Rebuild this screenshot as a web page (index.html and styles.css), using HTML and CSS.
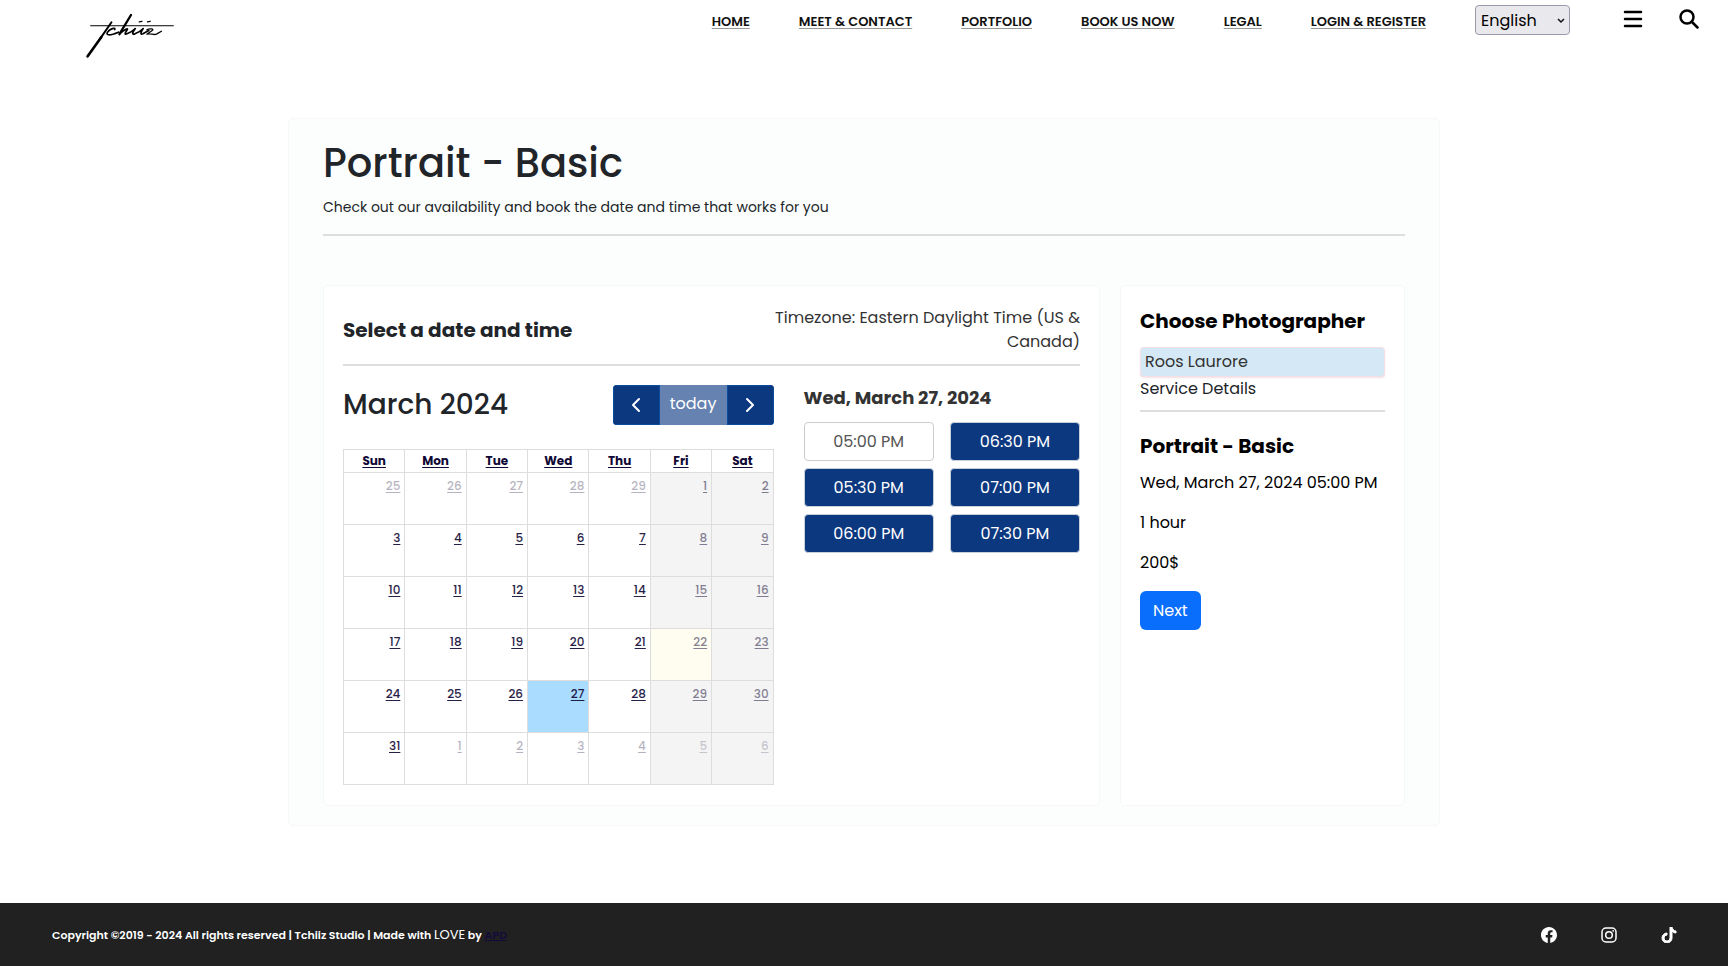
FILE: index.html
```html
<!DOCTYPE html>
<html lang="en">
<head>
<meta charset="utf-8">
<meta name="viewport" content="width=device-width, initial-scale=1">
<title>Portrait - Basic | Tchiiz Studio</title>
<link rel="stylesheet" href="styles.css">
</head>
<body>
<header class="site-header">
  <a class="logo" href="#" aria-label="Tchiiz">
    <svg viewBox="76 40 270 136" width="90" height="45" fill="none" stroke="#000" stroke-linecap="round" stroke-linejoin="round">
      <path d="M92 78.500H342" stroke-width="3"/>
      <path d="M155 68L122 116" stroke-width="6"/>
      <path d="M124 113L83 171" stroke-width="8"/>
      <path d="M165 90C168 82 150 88 143 98C137 108 150 109 176 98" stroke-width="5"/>
      <path d="M214 46L179 104" stroke-width="7"/>
      <path d="M181 102C192 91 206 84 203 90C197 99 192 107 202 103C212 99 222 92 227 87C220 97 214 107 226 103C236 99 246 92 251 87C244 97 240 107 250 103L268 93" stroke-width="5"/>
      <path d="M262 91C270 86 286 88 278 93L262 104C274 100 282 108 291 104L306 95" stroke-width="4"/>
      <path d="M239 67L247 65M264 67L272 65" stroke-width="4"/>
    </svg>
  </a>
  <nav class="nav" aria-label="Main">
    <a href="#">HOME</a>
    <a href="#">MEET &amp; CONTACT</a>
    <a href="#">PORTFOLIO</a>
    <a href="#">BOOK US NOW</a>
    <a href="#">LEGAL</a>
    <a href="#">LOGIN &amp; REGISTER</a>
  </nav>
  <div class="language">
    <select aria-label="Language"><option>English</option></select>
    <svg class="chevron" viewBox="0 0 8 6" width="8" height="6" fill="none" stroke="#111" stroke-width="1.500"><path d="M1 1l3 3 3-3"/></svg>
  </div>
  <div class="tools">
    <button class="icon-button" aria-label="Menu">
      <svg viewBox="0 0 20 20" width="20" height="20" stroke="#000" stroke-width="2.500" stroke-linecap="round"><path d="M2 3H18M2 10H18M2 17H18"/></svg>
    </button>
    <button class="icon-button" aria-label="Search">
      <svg viewBox="0 0 20 20" width="20" height="20" fill="none" stroke="#000" stroke-width="2.500" stroke-linecap="round"><circle cx="8" cy="8" r="6.500"/><path d="M13 13L18.500 18.500"/></svg>
    </button>
  </div>
</header>

<main class="main">
  <section class="booking">
    <h1>Portrait - Basic</h1>
    <p class="lead">Check out our availability and book the date and time that works for you</p>
    <hr>
    <div class="panels">
      <section class="panel schedule">
        <div class="schedule-head">
          <h2>Select a date and time</h2>
          <p class="timezone">Timezone: Eastern Daylight Time (US &amp; Canada)</p>
        </div>
        <hr>
        <div class="schedule-body">
          <div class="calendar">
            <div class="toolbar">
              <h2 class="month">March 2024</h2>
              <div class="button-group">
                <button aria-label="Previous month"><svg viewBox="0 0 10 16" width="10" height="16" fill="none" stroke="#fff" stroke-width="2" stroke-linecap="round" stroke-linejoin="round"><path d="M8 2L2 8l6 6"/></svg></button>
                <button class="today" disabled>today</button>
                <button aria-label="Next month"><svg viewBox="0 0 10 16" width="10" height="16" fill="none" stroke="#fff" stroke-width="2" stroke-linecap="round" stroke-linejoin="round"><path d="M2 2l6 6-6 6"/></svg></button>
              </div>
            </div>
            <table>
              <thead><tr><th><a href="#">Sun</a></th><th><a href="#">Mon</a></th><th><a href="#">Tue</a></th><th><a href="#">Wed</a></th><th><a href="#">Thu</a></th><th><a href="#">Fri</a></th><th><a href="#">Sat</a></th></tr></thead>
              <tbody>
                <tr><td class="other"><a href="#">25</a></td><td class="other"><a href="#">26</a></td><td class="other"><a href="#">27</a></td><td class="other"><a href="#">28</a></td><td class="other"><a href="#">29</a></td><td class="closed"><a href="#">1</a></td><td class="closed"><a href="#">2</a></td></tr>
                <tr><td><a href="#">3</a></td><td><a href="#">4</a></td><td><a href="#">5</a></td><td><a href="#">6</a></td><td><a href="#">7</a></td><td class="closed"><a href="#">8</a></td><td class="closed"><a href="#">9</a></td></tr>
                <tr><td><a href="#">10</a></td><td><a href="#">11</a></td><td><a href="#">12</a></td><td><a href="#">13</a></td><td><a href="#">14</a></td><td class="closed"><a href="#">15</a></td><td class="closed"><a href="#">16</a></td></tr>
                <tr><td><a href="#">17</a></td><td><a href="#">18</a></td><td><a href="#">19</a></td><td><a href="#">20</a></td><td><a href="#">21</a></td><td class="closed current"><a href="#">22</a></td><td class="closed"><a href="#">23</a></td></tr>
                <tr><td><a href="#">24</a></td><td><a href="#">25</a></td><td><a href="#">26</a></td><td class="selected"><a href="#">27</a></td><td><a href="#">28</a></td><td class="closed"><a href="#">29</a></td><td class="closed"><a href="#">30</a></td></tr>
                <tr><td><a href="#">31</a></td><td class="other"><a href="#">1</a></td><td class="other"><a href="#">2</a></td><td class="other"><a href="#">3</a></td><td class="other"><a href="#">4</a></td><td class="closed other"><a href="#">5</a></td><td class="closed other"><a href="#">6</a></td></tr>
              </tbody>
            </table>
          </div>
          <div class="times">
            <h3>Wed, March 27, 2024</h3>
            <div class="slots">
              <button class="slot chosen">05:00 PM</button>
              <button class="slot">06:30 PM</button>
              <button class="slot">05:30 PM</button>
              <button class="slot">07:00 PM</button>
              <button class="slot">06:00 PM</button>
              <button class="slot">07:30 PM</button>
            </div>
          </div>
        </div>
      </section>
      <aside class="panel details">
        <h2><label for="photographer">Choose Photographer</label></h2>
        <select id="photographer"><option>Roos Laurore</option></select>
        <p class="caption">Service Details</p>
        <hr>
        <h2>Portrait - Basic</h2>
        <p>Wed, March 27, 2024 05:00 PM</p>
        <p>1 hour</p>
        <p>200$</p>
        <button class="next">Next</button>
      </aside>
    </div>
  </section>
</main>

<footer class="site-footer">
  <p>Copyright ©2019 - 2024 All rights reserved | Tchiiz Studio | Made with <span class="love">LOVE</span> by <a href="#">APD</a></p>
  <div class="social">
    <a href="#" aria-label="Facebook"><svg viewBox="0 0 16 16" width="16" height="16" fill="#fff"><path d="M16 8.049c0-4.446-3.582-8.050-8-8.050C3.580 0-.002 3.603-.002 8.050c0 4.017 2.926 7.347 6.750 7.951v-5.625h-2.030V8.050H6.750V6.275c0-2.017 1.195-3.131 3.022-3.131.876 0 1.791.157 1.791.157v1.980h-1.009c-.993 0-1.303.621-1.303 1.258v1.510h2.218l-.354 2.326H9.250V16c3.824-.604 6.750-3.934 6.750-7.951"/></svg></a>
    <a href="#" aria-label="Instagram"><svg viewBox="0 0 16 16" width="16" height="16" fill="none" stroke="#fff" stroke-width="1.500"><rect x="1" y="1" width="14" height="14" rx="4"/><circle cx="8" cy="8" r="3.300"/><circle cx="12.200" cy="3.800" r=".9" fill="#fff" stroke="none"/></svg></a>
    <a href="#" aria-label="TikTok"><svg viewBox="0 0 16 16" width="16" height="16" fill="#fff"><path d="M9 0h1.980c.144.715.540 1.617 1.235 2.512C12.895 3.389 13.797 4 15 4v2c-1.753 0-3.070-.814-4-1.829V11a5 5 0 1 1-5-5v2a3 3 0 1 0 3 3z" stroke="#fff" stroke-width="1"/></svg></a>
  </div>
</footer>
</body>
</html>
```

FILE: styles.css
```css
* { box-sizing: border-box; }

body {
  margin: 0;
  min-height: 100vh;
  display: flex;
  flex-direction: column;
  background: #fff;
  color: #212529;
  font-family: Poppins, Inter, sans-serif;
  font-size: 16px;
  line-height: 24px;
}

h1, h2, h3, p { margin: 0; }
button, select { font: inherit; }
button { cursor: pointer; }
hr { margin: 0; border: 0; border-top: 2px solid #dcdedf; }

.site-header {
  display: flex;
  align-items: flex-start;
  height: 64px;
  padding: 5px 29px 0 85px;
}
.logo { margin: 8px auto 0 0; }
.logo svg { display: block; }
.nav { display: flex; gap: 49px; padding-top: 5px; }
.nav a {
  color: #111;
  font-size: 13px;
  font-weight: 600;
  text-decoration-color: #999;
  text-underline-offset: 2px;
}
.language { position: relative; margin-left: 49px; }
.language select {
  appearance: none;
  width: 95px;
  height: 30px;
  padding: 1px 5px 0;
  border: 1px solid #9a99ac;
  border-radius: 4px;
  background: #e9e9ed;
  color: #000;
}
.chevron { position: absolute; right: 5px; top: 13px; pointer-events: none; }
.tools { display: flex; gap: 36px; margin-left: 53px; padding-top: 4px; }
.icon-button { padding: 0; border: 0; background: none; }
.icon-button svg { display: block; }

.main { flex: 1; padding: 54px 16px 76px; }
.booking {
  max-width: 1152px;
  margin: 0 auto;
  padding: 20px 34px 19px;
  border: 1px solid #f5f8f7;
  border-radius: 5px;
  background: #fbfefd;
}
h1 { font-size: 40px; font-weight: 500; line-height: 48px; }
.lead { padding: 8px 0 15px; font-size: 14px; }
.panels { display: grid; grid-template-columns: 777fr 285fr; gap: 20px; margin-top: 49px; }
.panel {
  padding: 20px 19px;
  border: 1px solid #f5f8f7;
  border-radius: 5px;
  background: #fff;
}
.panel h2 { font-size: 20px; font-weight: 700; }

.schedule-head { display: flex; align-items: center; justify-content: space-between; padding-bottom: 10px; }
.timezone { width: 320px; color: #333; text-align: right; }
.schedule-body { display: grid; grid-template-columns: 430fr 276fr; gap: 30px; padding-top: 19px; }
.toolbar { display: flex; align-items: center; justify-content: space-between; margin-bottom: 24px; }
.toolbar .month { font-size: 28px; font-weight: 500; }
.button-group { display: flex; height: 40px; border-radius: 4px; overflow: hidden; }
.button-group button {
  width: 47px;
  padding: 0;
  border: 1px solid #0b4c9c;
  background: #0c3880;
  color: #fff;
}
.button-group svg { display: block; margin: 0 auto; }
.button-group .today { width: 67px; padding-bottom: 3px; border-color: #6582b0; background: #6582b0; }

table { width: 100%; border-collapse: collapse; table-layout: fixed; font-size: 12px; line-height: 16px; }
th, td { border: 1px solid #ddd; }
th { height: 23px; padding: 0; font-weight: 700; }
td { height: 52px; padding: 5px 4px; text-align: right; vertical-align: top; font-weight: 500; }
table a { color: #0f0835; text-underline-offset: 2px; }
td a { opacity: .9; }
.closed { background: #f4f4f4; }
.closed a { opacity: .5; }
.other a { opacity: .3; }
.closed.other a { opacity: .2; }
.current { background: #fffdf0; }
.selected { background: #aadcff; }

h3 { color: #333; font-size: 18px; font-weight: 700; line-height: 26px; }
.slots { display: grid; grid-template-columns: 1fr 1fr; gap: 7px 16px; margin-top: 11px; }
.slot {
  height: 39px;
  padding: 0;
  border: 1px solid #c9d0dc;
  border-radius: 4px;
  background: #0c3880;
  color: #fff;
}
.slot.chosen { border-color: #ccc; background: #fff; color: #555; }

.panel.details { padding-top: 23px; color: #000; }
.details select {
  display: block;
  appearance: none;
  width: 100%;
  height: 30px;
  margin-top: 14px;
  padding: 0 4px;
  border: 1px solid #f3dfe4;
  border-radius: 4px;
  background: #d4e9f5;
  color: #333;
  box-shadow: 0 1px 2px #f3dfe4;
}
.details p { margin-bottom: 16px; }
.details .caption { margin-bottom: 9px; color: #212529; }
.details hr { margin-bottom: 22px; }
.details hr + h2 { margin-bottom: 13px; }
.next {
  height: 39px;
  padding: 0 13px;
  border: 0;
  border-radius: 6px;
  background: #0a6efd;
  color: #fff;
}

.site-footer {
  display: flex;
  align-items: center;
  justify-content: space-between;
  height: 63px;
  padding: 0 51px 0 52px;
  background: #212121;
  color: #fff;
  font-size: 11px;
  font-weight: 600;
}
.love { font-size: 13px; font-weight: 400; }
.site-footer p a { color: #140a3c; }
.social { display: flex; gap: 44px; }
.social svg { display: block; }
```
